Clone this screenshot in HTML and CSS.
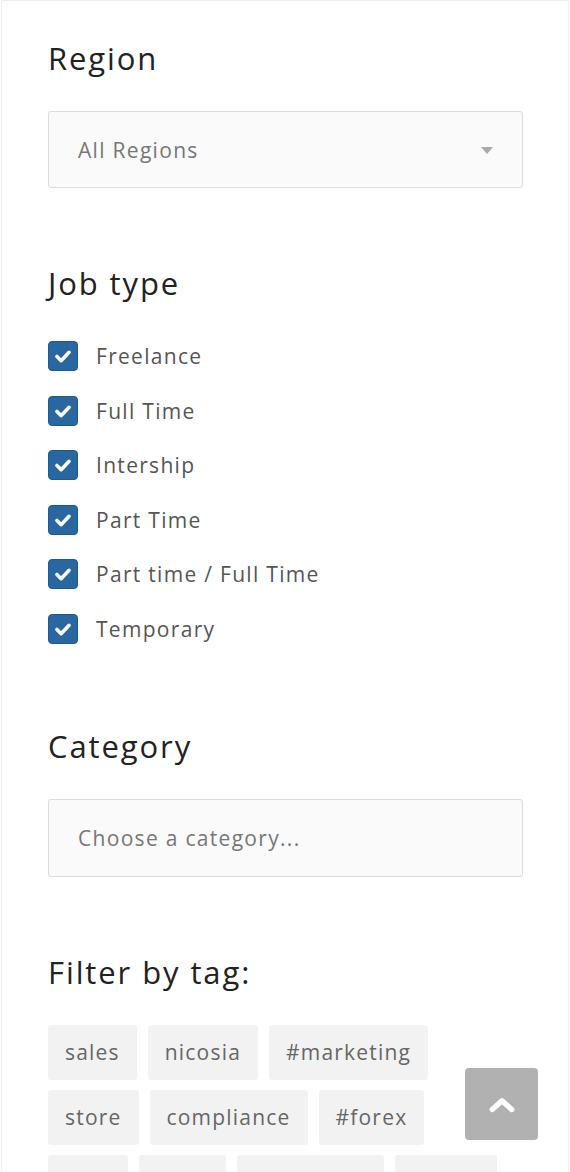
FILE: index.html
```html
<!DOCTYPE html>
<html lang="en">
<head>
<meta charset="utf-8">
<title>Job filters</title>
<link rel="stylesheet" href="styles.css">
</head>
<body>
<div class="page">
  <section class="widget">
    <h3 class="widget-title">Region</h3>
    <div class="select-box">
      <span class="select-text">All Regions</span>
      <span class="caret"></span>
    </div>
  </section>

  <section class="widget">
    <h3 class="widget-title">Job type</h3>
    <ul class="checklist">
      <li class="check-row"><span class="checkbox"><svg viewBox="0 0 30 30" class="tick"><path d="M8.5 15.5 L13 20 L21.5 11" /></svg></span><span class="check-label">Freelance</span></li>
      <li class="check-row"><span class="checkbox"><svg viewBox="0 0 30 30" class="tick"><path d="M8.5 15.5 L13 20 L21.5 11" /></svg></span><span class="check-label">Full Time</span></li>
      <li class="check-row"><span class="checkbox"><svg viewBox="0 0 30 30" class="tick"><path d="M8.5 15.5 L13 20 L21.5 11" /></svg></span><span class="check-label">Intership</span></li>
      <li class="check-row"><span class="checkbox"><svg viewBox="0 0 30 30" class="tick"><path d="M8.5 15.5 L13 20 L21.5 11" /></svg></span><span class="check-label">Part Time</span></li>
      <li class="check-row"><span class="checkbox"><svg viewBox="0 0 30 30" class="tick"><path d="M8.5 15.5 L13 20 L21.5 11" /></svg></span><span class="check-label">Part time / Full Time</span></li>
      <li class="check-row"><span class="checkbox"><svg viewBox="0 0 30 30" class="tick"><path d="M8.5 15.5 L13 20 L21.5 11" /></svg></span><span class="check-label">Temporary</span></li>
    </ul>
  </section>

  <section class="widget">
    <h3 class="widget-title">Category</h3>
    <div class="select-box select-box--tall">
      <span class="select-text">Choose a category...</span>
    </div>
  </section>

  <section class="widget">
    <h3 class="widget-title">Filter by tag:</h3>
    <div class="tags">
      <a class="tag">sales</a>
      <a class="tag">nicosia</a>
      <a class="tag">#marketing</a>
      <a class="tag">store</a>
      <a class="tag">compliance</a>
      <a class="tag">#forex</a>
      <a class="tag">jobs</a>
      <a class="tag">bank</a>
      <a class="tag">#investing</a>
      <a class="tag">admin</a>
    </div>
  </section>
</div>

<a class="back-top" aria-label="Back to top">
  <svg viewBox="0 0 24 16" class="chev"><path d="M3 13 L12 5 L21 13" /></svg>
</a>
</body>
</html>
```

FILE: styles.css
```css
html, body {
  margin: 0;
  padding: 0;
  background: #fff;
}

body {
  font-family: "Open Sans", "DejaVu Sans", sans-serif;
  color: #555;
}

.page {
  margin: 0 1px;
  border: 1px solid #eeeeee;
  padding: 39px 45px 40px 46px;
  min-height: 1300px;
}

.widget {
  margin-bottom: 77px;
}

.widget-title {
  margin: 0 0 35px;
  font-size: 31px;
  line-height: 36px;
  font-weight: 500;
  letter-spacing: 1.9px;
  color: #222;
}

.select-box {
  position: relative;
  display: flex;
  align-items: center;
  height: 77px;
  box-sizing: border-box;
  padding: 0 29px;
  background: #fafafa;
  border: 1px solid #dcdcdc;
  border-radius: 3px;
  font-size: 21px;
  letter-spacing: 1.3px;
  color: #777;
}

.select-box--tall {
  height: 78px;
}

.caret {
  position: absolute;
  right: 29px;
  top: 35px;
  width: 0;
  height: 0;
  border-left: 6px solid transparent;
  border-right: 6px solid transparent;
  border-top: 7px solid #aaa;
}

.checklist {
  list-style: none;
  margin: 0;
  padding: 5px 0 7px;
  display: flex;
  flex-direction: column;
  gap: 24.6px;
}

.check-row {
  display: flex;
  align-items: center;
  height: 30px;
}

.checkbox {
  width: 30px;
  height: 30px;
  box-sizing: border-box;
  border-radius: 4px;
  background: #28679f;
  border: 1px solid #1f5a8f;
  display: flex;
  align-items: center;
  justify-content: center;
  flex: none;
}

.tick {
  width: 30px;
  height: 30px;
  fill: none;
  stroke: #fff;
  stroke-width: 3.8;
  stroke-linecap: round;
  stroke-linejoin: round;
}

.check-label {
  margin-left: 18px;
  font-size: 21px;
  letter-spacing: 1.3px;
  color: #555;
}

.tags {
  display: flex;
  flex-wrap: wrap;
  gap: 10px 11px;
  padding-right: 20px;
}

.tag {
  display: flex;
  align-items: center;
  height: 55px;
  padding: 0 17px;
  background: #f2f2f2;
  border-radius: 3px;
  font-size: 21px;
  letter-spacing: 1.2px;
  color: #666;
}

.back-top {
  position: fixed;
  right: 32px;
  bottom: 32px;
  width: 73px;
  height: 72px;
  background: #b1b1b1;
  border-radius: 4px;
  display: flex;
  align-items: center;
  justify-content: center;
}

.chev {
  width: 26px;
  height: 18px;
  fill: none;
  stroke: #fff;
  stroke-width: 5;
  stroke-linecap: round;
  stroke-linejoin: round;
}
```
